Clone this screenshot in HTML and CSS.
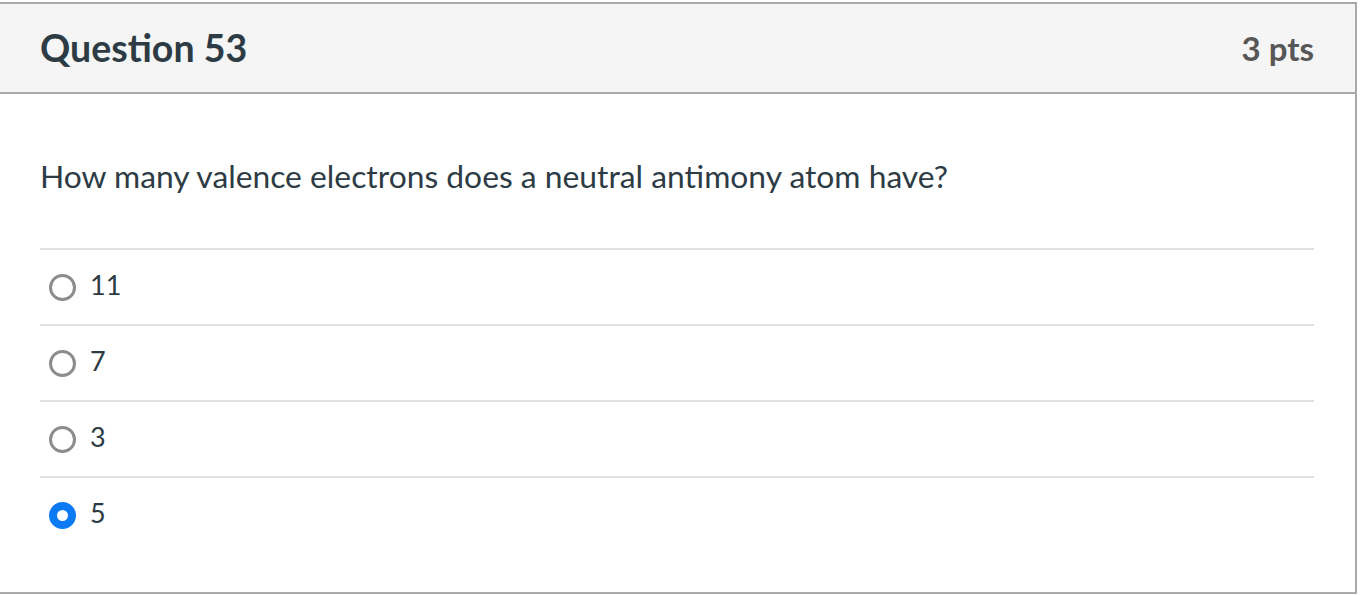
FILE: index.html
```html
<!DOCTYPE html>
<html lang="en">
<head>
<meta charset="utf-8">
<title>Question 53</title>
<link rel="stylesheet" href="styles.css">
</head>
<body>
<div class="card">
  <div class="card-header">
    <h2 class="q-title">Question 53</h2>
    <span class="q-points">3 pts</span>
  </div>
  <div class="card-body">
    <p class="q-text">How many valence electrons does a neutral antimony atom have?</p>
    <ul class="answers">
      <li class="answer"><span class="radio"></span><span class="label">11</span></li>
      <li class="answer"><span class="radio"></span><span class="label">7</span></li>
      <li class="answer"><span class="radio"></span><span class="label">3</span></li>
      <li class="answer"><span class="radio checked"></span><span class="label">5</span></li>
    </ul>
  </div>
</div>
</body>
</html>
```
FILE: styles.css
```css
html, body {
  margin: 0;
  padding: 0;
  background: #ffffff;
}
body {
  font-family: Lato, "Liberation Sans", sans-serif;
  color: #2d3b45;
  padding-top: 2px;
}
.card {
  width: 1359px;
  margin-left: -2px;
  border: 2px solid #a9a9a9;
  box-sizing: border-box;
  height: 592px;
}
.card-header {
  height: 88px;
  background: #f5f5f5;
  border-bottom: 2px solid #a9a9a9;
  display: flex;
  align-items: center;
  justify-content: space-between;
  padding: 0 41px 0 40px;
}
.q-title {
  margin: 0;
  font-size: 37.5px;
  font-weight: 700;
  color: #2d3b45;
  line-height: 44px;
}
.q-points {
  font-size: 33px;
  font-weight: 700;
  color: #575757;
  line-height: 44px;
}
.card-body {
  padding: 61px 41px 0 40px;
}
.q-text {
  margin: 0 0 51px;
  font-size: 31.8px;
  line-height: 42px;
}
.answers {
  list-style: none;
  margin: 0;
  padding: 0;
}
.answer {
  border-top: 2px solid #e1e1e1;
  height: 74px;
  display: flex;
  align-items: center;
  padding-left: 9px;
}
.radio {
  width: 27px;
  height: 27px;
  box-sizing: border-box;
  border: 3px solid #8c8c8c;
  border-radius: 50%;
  background: #fff;
  flex: none;
}
.radio.checked {
  border: 8px solid #0b7af3;
}
.label {
  margin-left: 14px;
  font-size: 27px;
  line-height: 34px;
  padding-bottom: 4px;
  color: #2d3b45;
}
```
